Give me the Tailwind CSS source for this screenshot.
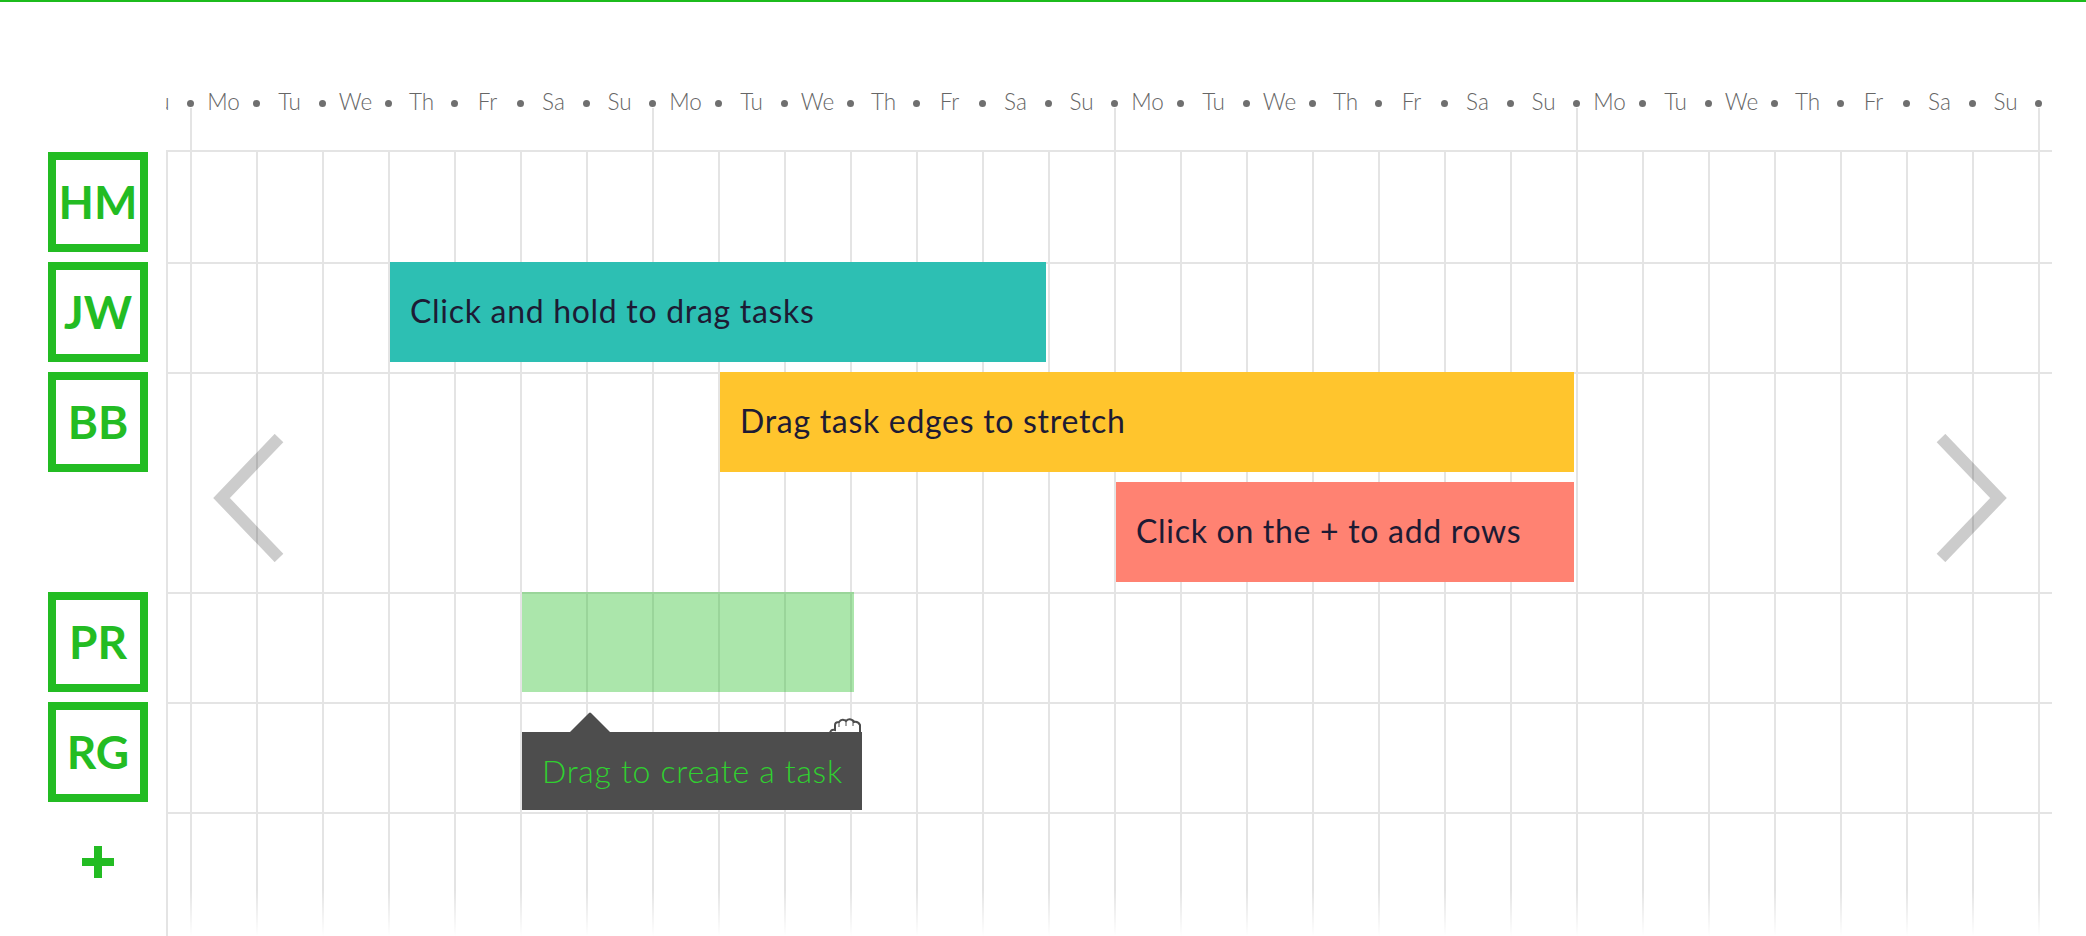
<!DOCTYPE html>
<html lang="en">
<head>
  <meta charset="UTF-8" />
  <title>Team schedule</title>
  <script src="https://cdn.jsdelivr.net/npm/@tailwindcss/browser@4"></script>
</head>
<body class="bg-white h-[936px] overflow-hidden border-t-2 border-[#1cbc1c] font-['Lato',sans-serif] antialiased">

  <div class="flex h-[934px]">

    <!-- People -->
    <aside class="w-[166px] shrink-0 pt-[150px] pl-[48px] flex flex-col text-[#23bc23] text-[46px] font-bold">
      <div class="w-[100px] h-[100px] mb-[10px] pb-[2px] border-[8px] border-[#23bc23] flex items-center justify-center">HM</div>
      <div class="w-[100px] h-[100px] mb-[10px] pb-[2px] border-[8px] border-[#23bc23] flex items-center justify-center">JW</div>
      <div class="w-[100px] h-[100px] mb-[120px] pb-[2px] border-[8px] border-[#23bc23] flex items-center justify-center">BB</div>
      <div class="w-[100px] h-[100px] mb-[10px] pb-[2px] border-[8px] border-[#23bc23] flex items-center justify-center">PR</div>
      <div class="w-[100px] h-[100px] mb-[44px] pb-[2px] border-[8px] border-[#23bc23] flex items-center justify-center">RG</div>
      <svg class="ml-[34px]" width="32" height="32" viewBox="0 0 32 32"><path d="M12 0h8v12h12v8H20v12h-8V20H0v-8h12z" fill="#23bc23"/></svg>
    </aside>

    <div class="relative flex-1 flex flex-col">
      <!-- Day labels -->
      <div id="days" class="h-[148px] pt-[84px] pl-[2px] overflow-hidden shrink-0"><div id="day-row" class="flex -ml-[40px] items-center h-[32px] text-[22.5px] font-light text-[#666]"></div></div>

      <!-- Board -->
      <div class="relative flex-1 border-l-2 border-[#e4e4e4] w-[1886px]">
        <div id="lines" class="absolute inset-0 flex pl-[22px]"></div>

        <div class="relative h-[112px] border-t-2 border-[#e4e4e4]"></div>

        <div class="relative h-[110px] border-t-2 border-[#e4e4e4]">
          <div class="-mt-[2px] ml-[222px] w-[656px] h-[100px] pl-[20px] pb-[2px] flex items-center bg-[#2dbfb3] text-[32px] tracking-[0.7px] text-[#1d1b34]">Click and hold to drag tasks</div>
        </div>

        <div class="relative h-[220px] border-t-2 border-[#e4e4e4]">
          <div class="-mt-[2px] ml-[552px] w-[854px] h-[100px] pl-[20px] pb-[2px] flex items-center bg-[#ffc52d] text-[32px] tracking-[0.7px] text-[#1d1b34]">Drag task edges to stretch</div>
          <div class="mt-[10px] ml-[948px] w-[458px] h-[100px] pl-[20px] pb-[2px] flex items-center bg-[#ff8272] text-[32px] tracking-[0.7px] text-[#1d1b34]">Click on the + to add rows</div>
        </div>

        <div class="relative h-[110px] border-t-2 border-[#e4e4e4]">
          <div class="-mt-[2px] ml-[354px] w-[332px] h-[100px] bg-[#23bc23]/38"></div>
        </div>

        <div class="relative h-[110px] border-t-2 border-[#e4e4e4]">
          <!-- Tooltip -->
          <svg class="absolute left-[402px] top-[8px]" width="40" height="20" viewBox="0 0 40 20"><path d="M0 20L19 1q1-1 2 0l19 19z" fill="#4d4d4d"/></svg>
          <svg class="absolute left-[660px] top-[14px]" width="34" height="16" viewBox="0 0 34 16">
            <path d="M2 16q0-5 5-4V7q0-3 4-3q2-3 5-2q1 0 2 1q3-3 6-1q2 1 2 2q4-1 6 3v9z" fill="#fff" stroke="#4d4d4d" stroke-width="2"/>
            <path d="M11 4v5M18 3v5M25 3v5" fill="none" stroke="#4d4d4d" stroke-width="1"/>
          </svg>
          <div class="absolute left-[354px] top-[28px] w-[340px] h-[78px] pl-[20px] flex items-center bg-[#4d4d4d] text-[#30d030] text-[32px] tracking-[0.7px] font-light">Drag to create a task</div>
        </div>

        <div class="relative border-t-2 border-[#e4e4e4] flex-1 h-[124px]"></div>

        <div class="absolute bottom-0 left-0 right-0 h-[46px] bg-linear-to-b from-white/0 to-white"></div>
      </div>

      <!-- Arrows -->
      <svg class="absolute left-[47px] top-[432px]" width="76" height="128" viewBox="0 0 76 128"><path d="M66 4L8.500 64L66 124" fill="none" stroke="#000" stroke-opacity=".2" stroke-width="12"/></svg>
      <svg class="absolute left-[1765px] top-[432px]" width="76" height="128" viewBox="0 0 76 128"><path d="M10 4L67.500 64L10 124" fill="none" stroke="#000" stroke-opacity=".2" stroke-width="12"/></svg>
    </div>
  </div>

  <script>
    const names = ['Su', 'Mo', 'Tu', 'We', 'Th', 'Fr', 'Sa'];
    const dayRow = document.getElementById('day-row');
    for (let i = 0; i < 29; i++) {
      const label = document.createElement('span');
      label.className = 'w-[59px] shrink-0 text-center';
      label.textContent = names[i % 7];
      const dot = document.createElement('span');
      dot.className = 'w-[7px] h-[7px] shrink-0 mt-[3px] rounded-full bg-[#6f6f6f]';
      dayRow.append(label, dot);
    }

    const lines = document.getElementById('lines');
    for (let i = 0; i < 29; i++) {
      const line = document.createElement('div');
      const width = i === 28 ? 'w-[2px]' : 'w-[66px]';
      const tall = i % 7 === 0 ? '-mt-[42px]' : '';
      line.className = `${width} ${tall} shrink-0 border-l-2 border-[#e4e4e4]`;
      lines.append(line);
    }
  </script>
</body>
</html>
